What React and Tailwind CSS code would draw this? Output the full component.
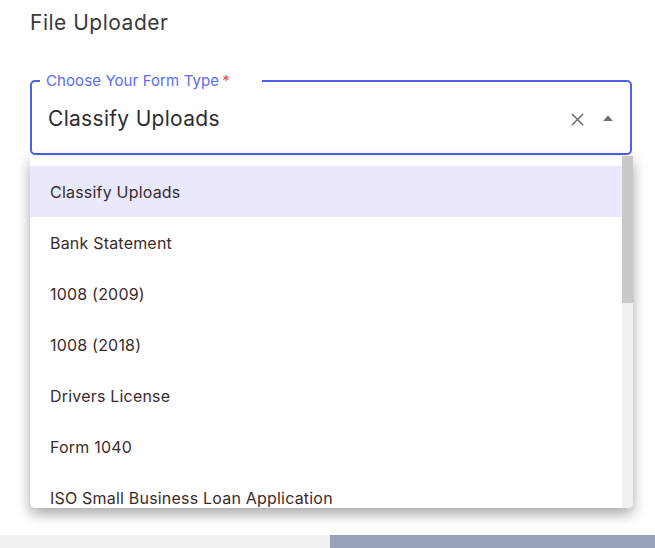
import { X } from "lucide-react";

const options = [
  "Classify Uploads",
  "Bank Statement",
  "1008 (2009)",
  "1008 (2018)",
  "Drivers License",
  "Form 1040",
  "ISO Small Business Loan Application",
];

export default function App() {
  return (
    <div className="min-h-screen bg-white font-['Inter',sans-serif] relative overflow-hidden">
      <div className="pl-[30px] pr-[23px] pt-[10px]">
        <h1 className="text-[21px] leading-[26px] text-[#3a3a3a] tracking-[0.5px]">File Uploader</h1>

        {/* Select */}
        <div className="relative mt-[37px]">
          <fieldset className="h-[82px] border-2 border-[#4f5fee] rounded-[5px] px-[8px]">
            <legend className="pl-[6px] pr-[32px] text-[15px] leading-[16px] text-[#5b6cf0] tracking-[0.1px]">
              Choose Your Form Type<span className="text-[#e04848] ml-[3px]">*</span>
            </legend>
            <div className="flex items-center h-[60px] pl-[8px] pr-[8px]">
              <span className="flex-1 text-[21px] text-[#2e2e2e] tracking-[0.3px]">Classify Uploads</span>
              <X className="w-[21px] h-[21px] text-[#707070] mr-[14px]" strokeWidth={1.8} />
              <svg width="12" height="8" viewBox="0 0 12 8" className="mb-[2px]">
                <path d="M1 7 L6 1.5 L11 7 Z" fill="#707070" />
              </svg>
            </div>
          </fieldset>

          {/* Dropdown */}
          <div className="absolute left-0 top-[83px] w-[603px] h-[352px] bg-white rounded-b-[5px] shadow-[0_6px_14px_rgba(0,0,0,0.35)] overflow-hidden flex">
            <ul className="flex-1 pt-[10px]">
              {options.map((o, i) => (
                <li
                  key={o}
                  className={`h-[51px] flex items-center pl-[20px] text-[16px] text-[#3b2b2b] tracking-[0.2px] ${
                    i === 0 ? "bg-[#e8eafb]" : ""
                  }`}
                >
                  {o}
                </li>
              ))}
            </ul>
            <div className="w-[11px] bg-[#f1f1f1]">
              <div className="h-[147px] bg-[#c9c9c9]" />
            </div>
          </div>
        </div>
      </div>

      <div className="h-[380px]" />

      <div className="flex h-[13px]">
        <div className="w-[330px] bg-[#f1f1f1]" />
        <div className="flex-1 bg-[#98a1b8]" />
      </div>
    </div>
  );
}
